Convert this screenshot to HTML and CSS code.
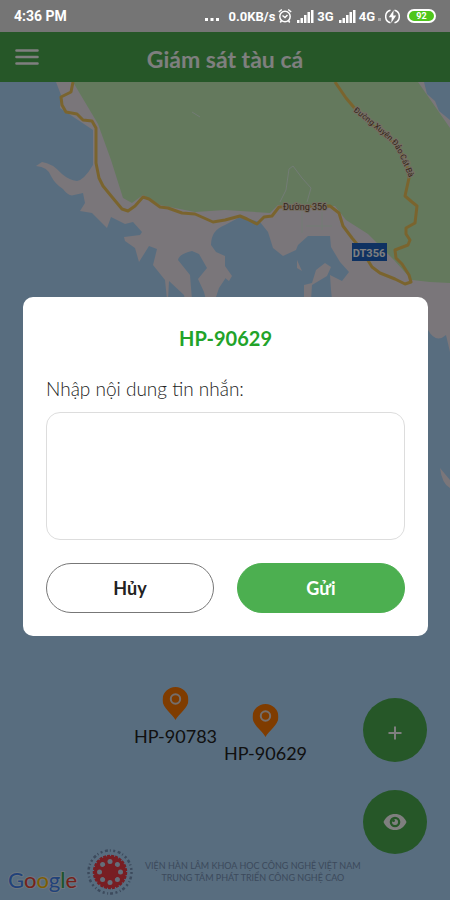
FILE: index.html
```
<!DOCTYPE html>
<html lang="vi">
<head>
  <meta charset="UTF-8"/>
  <meta name="viewport" content="width=device-width, initial-scale=1.0"/>
  <title>Giám sát tàu cá</title>
  <link rel="stylesheet" href="styles.css">
</head>
<body>
  <!-- Status bar -->
  <div class="status">
    <span class="time">4:36 PM</span>
    <div class="status-right">
      <svg width="16" height="16" viewBox="0 0 16 16" fill="#fff"><path d="M1 10h3v3H1zM6.500 10h3v3h-3zM12 10h3v3h-3z"/></svg>
      <span class="speed">0.0KB/s</span>
      <svg width="14" height="16" viewBox="0 0 14 16" fill="none" stroke="#fff" stroke-width="1.500">
        <circle cx="7" cy="8.500" r="5.200"/>
        <path d="M4.500 7.500L7 9.500L9.500 7M0.800 4L3.800 1.500M13.200 4L10.200 1.500M3.500 12.500L2.300 14.500M10.500 12.500L11.700 14.500"/>
      </svg>
      <svg class="signal" width="17" height="14" viewBox="0 0 17 14" fill="#fff"><path d="M0 11h2.500v3H0zM3.500 9H6v5H3.500zM7 6h2.500v8H7zM10.500 3H13v11h-2.500zM14 1h2.500v13H14z"/></svg>
      <span>3G</span>
      <svg class="signal" width="17" height="14" viewBox="0 0 17 14" fill="#fff"><path d="M0 11h2.500v3H0zM3.500 9H6v5H3.500zM7 6h2.500v8H7zM10.500 3H13v11h-2.500zM14 1h2.500v13H14z"/></svg>
      <span>4G</span>
      <svg width="4" height="14" viewBox="0 0 4 14"><path d="M0 9h3v3H0z" fill="#aaa"/></svg>
      <svg class="bolt" width="15" height="15" viewBox="0 0 15 15">
        <path d="M5.500 1.300a6.400 6.400 0 0 0 0 12.400M9.500 1.300a6.400 6.400 0 0 1 0 12.400" fill="none" stroke="#fff" stroke-width="1.500"/>
        <path d="M8.700 1L3.800 8.300h3L6.200 14L11.200 6.500H8.200z" fill="#fff"/>
      </svg>
      <span class="battery">92</span>
    </div>
  </div>

  <div class="screen">
    <header class="header">
      <button class="menu" aria-label="Menu">
        <svg width="24" height="18" viewBox="0 0 24 18"><path d="M1.500 2.500h21M1.500 9h21M1.500 15.500h21" stroke="#fff" stroke-width="2.600" stroke-linecap="round"/></svg>
      </button>
      <h1>Giám sát tàu cá</h1>
    </header>

    <main class="map">
      <svg class="map-canvas" viewBox="0 82 450 818" preserveAspectRatio="xMidYMin slice">
        <!-- land -->
        <path fill="#f4ecf4" d="M56 82L61 95L60 108L75 118L93 130L93 165Q84 180 77 181Q69 180 62 174Q52 163 42 162L36 166Q48 167 51 176Q55 184 63 189Q69 197 74 195L83 193L85 203L80 211L92 213L107 228L111 217L125 224L133 222L142 232L140 235L124 237L125 241L135 248L139 262L149 246L157 249L153 265L165 280L167 300H168L169 281L184 295L185 300H192L190 275L178 260Q179 254 192 251L199 254L207 268L198 279L204 292L206 300H215L219 288L225 279L225 256L216 252L211 245Q211 230 225 225L240 217L260 222L268 232L273 248L283 256L296 250L298 245L308 236L330 236L331 247L340 262L349 272L342 281L330 275L331 290L332 300L428 330Q436 344 446 335L450 352V82z"/>
        <path fill="#f4ecf4" d="M304 300V285L312 283L316 270L325 263L331 267L327 276L312 285L311 300zM297 260L302 271L297 268zM225 266L232 276L229 281L225 278zM440 468L450 480V488Q442 484 440 468z"/>
        <path fill="#b0daff" d="M424 82L427 94L435 101L439 111L450 120V82z"/>
        <!-- national park -->
        <path fill="#c8f2ba" d="M73 82L98 124L111 160L123 198L132 203L143 195L160 205L195 212L225 210L270 213L278 205L335 206L346 220L368 234L394 260L412 280L430 282L450 283V128L418 82z"/>
        <!-- small paths -->
        <path fill="none" stroke="#e6f8ea" stroke-width="1" d="M280 202L286 190L289 169L293 166L302 178L311 188L307 202M192 112L200 117M302 208V233M306 226H332M322 212V230"/>
        <!-- roads -->
        <path class="road" d="M73 82L71 92L61 97L62 105L66 112L77 114L83 120L92 121L96 128L96 163L99 178L103 186L112 197L122 209L128 211L135 206L143 197L149 199L160 207L168 208L182 213L195 214L213 222L225 220L240 216L247 219L257 224L264 217L272 216L279 207L330 206L339 213L343 226L352 238L361 249L372 267L380 273L395 279L405 284L411 282L409 275L402 264L396 258L395 250L408 245L410 240L406 234L406 228L415 223L417 206L412 202L405 196L409 178L407 166L398 146L380 132L357 111L346 98L335 82"/>
        <path id="road-label" fill="none" d="M353 111Q382 133 394 145Q402 158 412 186"/>
        <text class="road-text road-text-small"><textPath href="#road-label">Đường Xuyên Đảo Cát Bà</textPath></text>
        <text class="road-text" x="283" y="210">Đường 356</text>
        <rect x="352" y="243" width="35" height="18" fill="#1e64c4"/>
        <text class="route-text" x="369" y="257" text-anchor="middle">DT356</text>
      </svg>

      <!-- Ships -->
      <div class="ship ship-a">
        <svg width="26" height="34" viewBox="0 0 26 34"><path d="M13 33C10 27 0 21 0 13a13 13 0 0 1 26 0C26 21 16 27 13 33z" fill="#ff7800"/><circle cx="13" cy="12" r="4.700" fill="#ff7800" stroke="#e8ddd8" stroke-width="2"/></svg>
        <span>HP-90783</span>
      </div>
      <div class="ship ship-b">
        <svg width="26" height="34" viewBox="0 0 26 34"><path d="M13 33C10 27 0 21 0 13a13 13 0 0 1 26 0C26 21 16 27 13 33z" fill="#ff7800"/><circle cx="13" cy="12" r="4.700" fill="#ff7800" stroke="#e8ddd8" stroke-width="2"/></svg>
        <span>HP-90629</span>
      </div>

      <div class="fabs">
        <button class="fab" aria-label="Thêm">
          <svg class="plus" width="14" height="14" viewBox="0 0 14 14"><path d="M7 0.500v13M0.500 7h13" stroke="#fff" stroke-width="2"/></svg>
        </button>
        <button class="fab" aria-label="Hiển thị">
          <svg width="24" height="18" viewBox="0 0 24 18"><path d="M0.500 9C3 3.500 7 1 12 1s9 2.500 11.500 8C21 14.500 17 17 12 17S3 14.500 0.500 9z" fill="#fff"/><circle cx="12" cy="9" r="5.300" fill="#4caf50"/><circle cx="12" cy="9" r="3" fill="#fff"/><circle cx="10.500" cy="7.500" r="1.500" fill="#4caf50"/></svg>
        </button>
      </div>

      <footer class="credits">
        <div class="google"><span class="b">G</span><span class="r">o</span><span class="y">o</span><span class="b">g</span><span class="g">l</span><span class="r">e</span></div>
        <svg class="emblem" width="48" height="48" viewBox="0 0 48 48">
          <circle cx="24" cy="24" r="21.500" fill="none" stroke="#7894b8" stroke-width="2.500" stroke-dasharray="2 2.500 3 2 1 2.500"/>
          <circle cx="24" cy="24" r="16" fill="#f03c46" stroke="#f03c46" stroke-width="2.500" stroke-dasharray="3 1"/>
          <g fill="#c8dcf5">
            <circle cx="24" cy="13.500" r="2.500"/><circle cx="31.400" cy="16.600" r="2.500"/>
            <circle cx="34.500" cy="24" r="2.500"/><circle cx="31.400" cy="31.400" r="2.500"/>
            <circle cx="24" cy="34.500" r="2.500"/><circle cx="16.600" cy="31.400" r="2.500"/>
            <circle cx="13.500" cy="24" r="2.500"/><circle cx="16.600" cy="16.600" r="2.500"/>
          </g>
          <circle cx="24" cy="24" r="8" fill="#f03c46"/>
        </svg>
        <p>VIỆN HÀN LÂM KHOA HỌC CÔNG NGHỆ VIỆT NAM<br>TRUNG TÂM PHÁT TRIỂN CÔNG NGHỆ CAO</p>
      </footer>
    </main>

    <!-- Message dialog -->
    <div class="backdrop">
      <form class="dialog" onsubmit="return false;">
        <h2>HP-90629</h2>
        <label for="message">Nhập nội dung tin nhắn:</label>
        <textarea id="message"></textarea>
        <div class="actions">
          <button type="button" class="btn">Hủy</button>
          <button type="submit" class="btn btn-send">Gửi</button>
        </div>
      </form>
    </div>
  </div>
</body>
</html>
```
FILE: styles.css
```
* { box-sizing:border-box }
body { margin:0; min-height:100vh; display:flex; flex-direction:column;
       font-family:Lato, sans-serif }
button { font-family:inherit; border:none; padding:0; cursor:pointer }
svg { display:block; flex:none }

.status { height:32px; padding:0 14px; background:#757575; color:#fff;
          display:flex; align-items:center; justify-content:space-between;
          font:bold 14px Roboto, sans-serif }
.status-right { display:flex; align-items:center; gap:3px; font-size:13px }
.speed { margin-left:6px }
.signal { margin-left:2px }
.bolt { margin-right:4px }
.battery { width:29px; height:14px; border:2px solid #fff; border-radius:7px;
           background:#4fc61c; font-size:9px; line-height:10px; text-align:center }

.screen { flex:1; position:relative; display:flex; flex-direction:column }
.header { height:50px; padding:0 15px; background:#4caf50; color:#fff;
          display:grid; grid-template-columns:24px 1fr 24px; align-items:center }
.header h1 { margin:0; padding-top:4px; font-size:23px; line-height:28px; text-align:center }
.menu { background:none }

.map { flex:1; position:relative; display:flex; flex-direction:column;
       justify-content:flex-end; overflow:hidden; background:#b0daff }
.map-canvas { position:absolute; top:0; left:0; width:100%; height:100% }
.road { fill:none; stroke:#f4c95c; stroke-width:3; stroke-linejoin:round }
.road-text { font:9px Roboto, sans-serif; fill:#6e4a32; stroke:#e8dcc8;
             stroke-width:2px; paint-order:stroke }
.road-text-small { font-size:8px }
.route-text { font:bold 11px Roboto, sans-serif; fill:#fff }

.ship { position:absolute; display:flex; flex-direction:column; align-items:center;
        transform:translateX(-50%); font-size:18px; line-height:22px; color:#222 }
.ship span { padding-top:4px }
.ship-a { left:39%; top:74% }
.ship-b { left:59%; top:76% }

.fabs { position:absolute; right:23px; bottom:46px; display:grid; gap:28px }
.fab { width:64px; height:64px; border-radius:50%; background:#4caf50;
       display:flex; align-items:center; justify-content:center }
.plus { margin-top:6px }

.credits { position:relative; display:flex; align-items:center; padding:0 8px 4px }
.google { width:64px; padding-top:16px; font-size:22px; line-height:24px;
          -webkit-text-stroke:2px #d8ecff; paint-order:stroke fill }
.b { color:#4285f4 }
.r { color:#ea4335 }
.y { color:#fbbc05 }
.g { color:#34a853 }
.emblem { margin:0 11px 0 14px }
.credits p { margin:0; font-size:9px; line-height:12px; text-align:center; color:#7894b8 }

.backdrop { position:absolute; inset:0; padding:0 22px 0 23px;
            background:rgba(0,0,0,0.5); display:flex; align-items:center }
.dialog { width:100%; padding:27px 23px 23px; background:#fff; border-radius:10px }
.dialog h2 { margin:0; font-size:20px; line-height:28px; text-align:center; color:#22a329 }
.dialog label { display:block; margin-top:23px; font-size:19px; line-height:28px;
                font-weight:300; color:#222 }
textarea { display:block; width:100%; height:128px; margin-top:9px; padding:12px;
           border:1px solid #ddd; border-radius:14px; resize:none; font:18px Lato, sans-serif }
.actions { display:grid; grid-template-columns:1fr 1fr; gap:23px; margin-top:23px }
.btn { height:50px; border:1px solid #777; border-radius:25px; background:#fff;
       color:#222; font-size:18px; font-weight:bold }
.btn-send { background:#4caf50; border-color:#4caf50; color:#fff }
```
